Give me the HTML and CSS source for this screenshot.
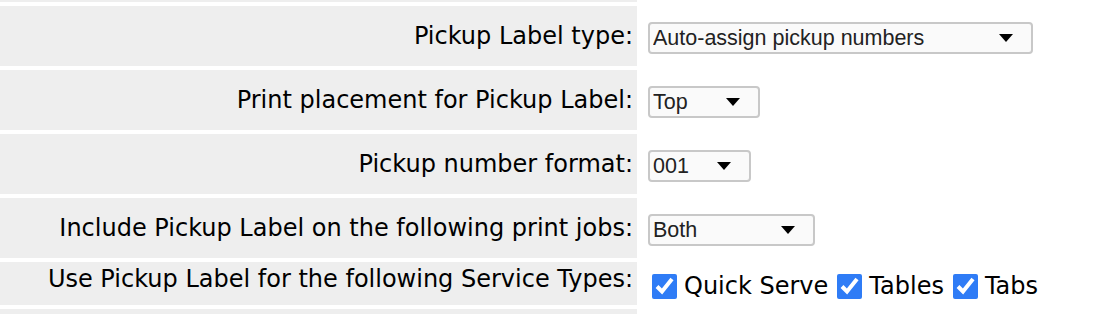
FILE: index.html
```html
<!DOCTYPE html>
<html lang="en">
<head>
  <meta charset="UTF-8" />
  <title>Pickup Label Settings</title>
  <link rel="stylesheet" href="styles.css">
</head>
<body>
  <div class="settings">
    <div class="row row-cut-top">
      <div class="label"></div>
      <div class="value"></div>
    </div>

    <div class="row">
      <div class="label">Pickup Label type:</div>
      <div class="value">
        <select class="pick pick-wide">
          <option>Auto-assign pickup numbers</option>
        </select>
      </div>
    </div>

    <div class="row">
      <div class="label">Print placement for Pickup Label:</div>
      <div class="value">
        <select class="pick pick-top">
          <option>Top</option>
          <option>Bottom</option>
        </select>
      </div>
    </div>

    <div class="row">
      <div class="label">Pickup number format:</div>
      <div class="value">
        <select class="pick pick-num">
          <option>001</option>
          <option>1</option>
        </select>
      </div>
    </div>

    <div class="row">
      <div class="label">Include Pickup Label on the following print jobs:</div>
      <div class="value">
        <select class="pick pick-both">
          <option>Both</option>
        </select>
      </div>
    </div>

    <div class="row row-short">
      <div class="label">Use Pickup Label for the following Service Types:</div>
      <div class="value checks">
        <label><input type="checkbox" checked> Quick Serve</label>
        <label><input type="checkbox" checked> Tables</label>
        <label><input type="checkbox" checked> Tabs</label>
      </div>
    </div>

    <div class="row row-cut-bottom">
      <div class="label"></div>
      <div class="value"></div>
    </div>
  </div>
</body>
</html>
```

FILE: styles.css
```css
:root {
  --label-bg: #eeeeee;
  --text: #000000;
  --select-border: #c8c8c8;
  --check: #2f7cf6;
}

body {
  margin: 0;
  background: #ffffff;
  color: var(--text);
  font-family: Verdana, 'DejaVu Sans', sans-serif;
  overflow: hidden;
}

.settings {
  display: flex;
  flex-direction: column;
  gap: 4px;
}

.row {
  display: grid;
  grid-template-columns: 637px 1fr;
  height: 60px;
}

.row-cut-top {
  height: 2px;
}

.row-cut-bottom {
  height: 10px;
}

.row-short {
  height: 43px;
}

.label {
  background: var(--label-bg);
  display: flex;
  align-items: center;
  justify-content: flex-end;
  padding-right: 4px;
  font-size: 24px;
  white-space: nowrap;
}

.row-short .label {
  align-items: flex-start;
  padding-top: 3px;
}

.value {
  display: flex;
  align-items: center;
  padding-left: 11px;
}

.pick {
  appearance: none;
  -webkit-appearance: none;
  font-family: Arial, 'Liberation Sans', sans-serif;
  font-size: 21.5px;
  color: #222;
  height: 32px;
  padding: 0 30px 0 3px;
  border: 2px solid var(--select-border);
  border-radius: 4px;
  background-color: #fafafa;
  background-image: url("data:image/svg+xml,%3Csvg xmlns='http://www.w3.org/2000/svg' width='14' height='8'%3E%3Cpath d='M0 0h14L7 8z' fill='%23000'/%3E%3C/svg%3E");
  background-repeat: no-repeat;
  background-position: right 18px center;
  margin-top: 3px;
}

.pick-wide { width: 385px; }
.pick-top { width: 112px; }
.pick-num { width: 103px; }
.pick-both { width: 167px; }

.checks {
  align-items: flex-start;
  padding-top: 10px;
  padding-left: 15px;
  gap: 9px;
  font-size: 24px;
}

.checks label {
  display: flex;
  align-items: center;
  gap: 7px;
}

.checks input {
  width: 25px;
  height: 25px;
  margin: 0;
  accent-color: var(--check);
}
```
